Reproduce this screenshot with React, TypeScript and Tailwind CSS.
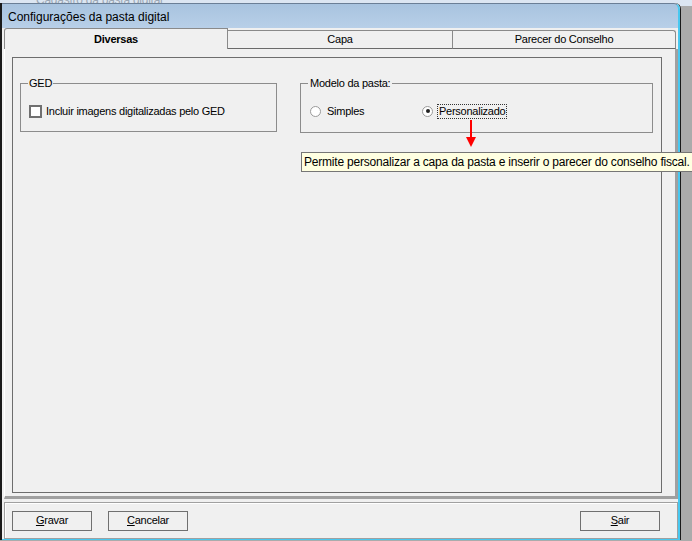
export default function App() {
  return (
    <div className="relative w-[692px] h-[541px] overflow-hidden bg-[#ababab] text-[11px] tracking-[-0.25px] text-black" style={{ fontFamily: '"Liberation Sans", Arial, sans-serif' }}>
      {/* window behind */}
      <div className="absolute left-0 top-0 w-[692px] h-[6px] bg-[#dce6f2]">
        <span className="absolute left-[36px] top-[-9px] text-[12px] text-[#9aa6b4]">Cadastro da pasta digital</span>
      </div>
      <div className="relative mt-[3px] w-[681px] h-[537px] flex flex-col border-l-2 border-r border-b border-[#1a1a1a] rounded-tr-[6px] bg-[#f0f0f0]">
        {/* title bar */}
        <div className="h-[25px] shrink-0 flex items-center pl-[6px] bg-gradient-to-b from-[#a8c3df] to-[#b8cfe8] border-t border-[#6b7f96] rounded-tr-[6px] border-r-2 border-r-[#48c8f0]">
          <span className="mt-[1px] text-[12px] tracking-normal">Configurações da pasta digital</span>
        </div>
        <div className="flex-1 flex flex-col bg-[#f0f0f0] border-r-2 border-b border-[#48c8f0] pl-[2px]">
          {/* tabs */}
          <div className="flex h-[21px] items-end shrink-0">
            <div className="shrink-0 w-[224px] h-[21px] bg-[#f0f0f0] border-t border-l border-r border-[#8a8a8a] rounded-tl-[3px] flex items-center justify-center font-bold z-10">
              Diversas
            </div>
            <div className="shrink-0 w-[225px] h-[19px] bg-[#f0f0f0] border-t border-r border-[#8a8a8a] border-b border-b-[#6a6a6a] flex items-center justify-center">
              Capa
            </div>
            <div className="shrink-0 w-[223px] h-[19px] bg-[#f0f0f0] border-t border-r border-[#8a8a8a] border-b border-b-[#6a6a6a] rounded-tr-[3px] flex items-center justify-center">
              Parecer do Conselho
            </div>
          </div>
          {/* tab panel */}
          <div className="shrink-0 w-[674px] h-[450px] border-l border-[#ffffff] border-r-[3px] border-r-[#a0a0a0] border-b-[3px] border-b-[#a0a0a0] pt-[8px] pl-[7px]">
            <div className="w-[650px] h-[436px] border border-[#6d6d6d] bg-[#f0f0f0] relative">
              <div className="flex pt-[18px] pl-[7px]">
                {/* GED group */}
                <fieldset className="w-[257px] h-[56px] border border-[#8c8c8c] px-[8px] m-0">
                  <legend className="px-[1px] ml-[-1px] leading-[14px]">GED</legend>
                  <label className="flex items-center gap-[4px] mt-[13px]">
                    <span className="w-[13px] h-[13px] border-2 border-[#707070] bg-white inline-block" />
                    <span>Incluir imagens digitalizadas pelo GED</span>
                  </label>
                </fieldset>
                {/* Modelo group */}
                <fieldset className="ml-[23px] w-[353px] h-[57px] border border-[#8c8c8c] px-[8px] m-0">
                  <legend className="px-[2px] ml-[-1px] leading-[14px]">Modelo da pasta:</legend>
                  <div className="flex items-center mt-[13px]">
                    <span className="shrink-0 w-[11px] h-[11px] rounded-full border border-[#9a9a9a] bg-white ml-[1px]" />
                    <span className="ml-[6px] w-[95px]">Simples</span>
                    <span className="shrink-0 w-[11px] h-[11px] rounded-full border border-[#9a9a9a] bg-white flex items-center justify-center">
                      <span className="w-[4px] h-[4px] rounded-full bg-[#222]" />
                    </span>
                    <span className="ml-[4px] px-[1px] border border-dotted border-[#333] leading-[13px]">Personalizado</span>
                  </div>
                </fieldset>
              </div>
              {/* red arrow */}
              <svg className="absolute left-[452px] top-[62px]" width="12" height="28" viewBox="0 0 12 28">
                <line x1="6" y1="0" x2="6" y2="20" stroke="#ff0000" strokeWidth="2" />
                <polygon points="1,17 11,17 6,27" fill="#ff0000" />
              </svg>
            </div>
          </div>
          {/* bottom bar */}
          <div className="mt-[3px] w-[674px] h-[37px] border border-[#a0a0a0] shadow-[inset_1px_1px_0_#ffffff] flex items-center px-[7px]">
            <button className="w-[80px] h-[20px] border border-[#707070] bg-[#f0f0f0]"><u>G</u>ravar</button>
            <button className="ml-[16px] w-[80px] h-[20px] border border-[#707070] bg-[#f0f0f0]"><u>C</u>ancelar</button>
            <div className="flex-1" />
            <button className="mr-[10px] w-[80px] h-[20px] border border-[#707070] bg-[#f0f0f0]"><u>S</u>air</button>
          </div>
        </div>
      </div>
      {/* tooltip */}
      <div className="absolute left-[301px] top-[152px] h-[20px] w-[400px] pl-[2px] bg-[#ffffe1] border border-[#767676] flex items-center whitespace-nowrap text-[12px] tracking-[-0.2px]">
        Permite personalizar a capa da pasta e inserir o parecer do conselho fiscal.
      </div>
    </div>
  );
}
